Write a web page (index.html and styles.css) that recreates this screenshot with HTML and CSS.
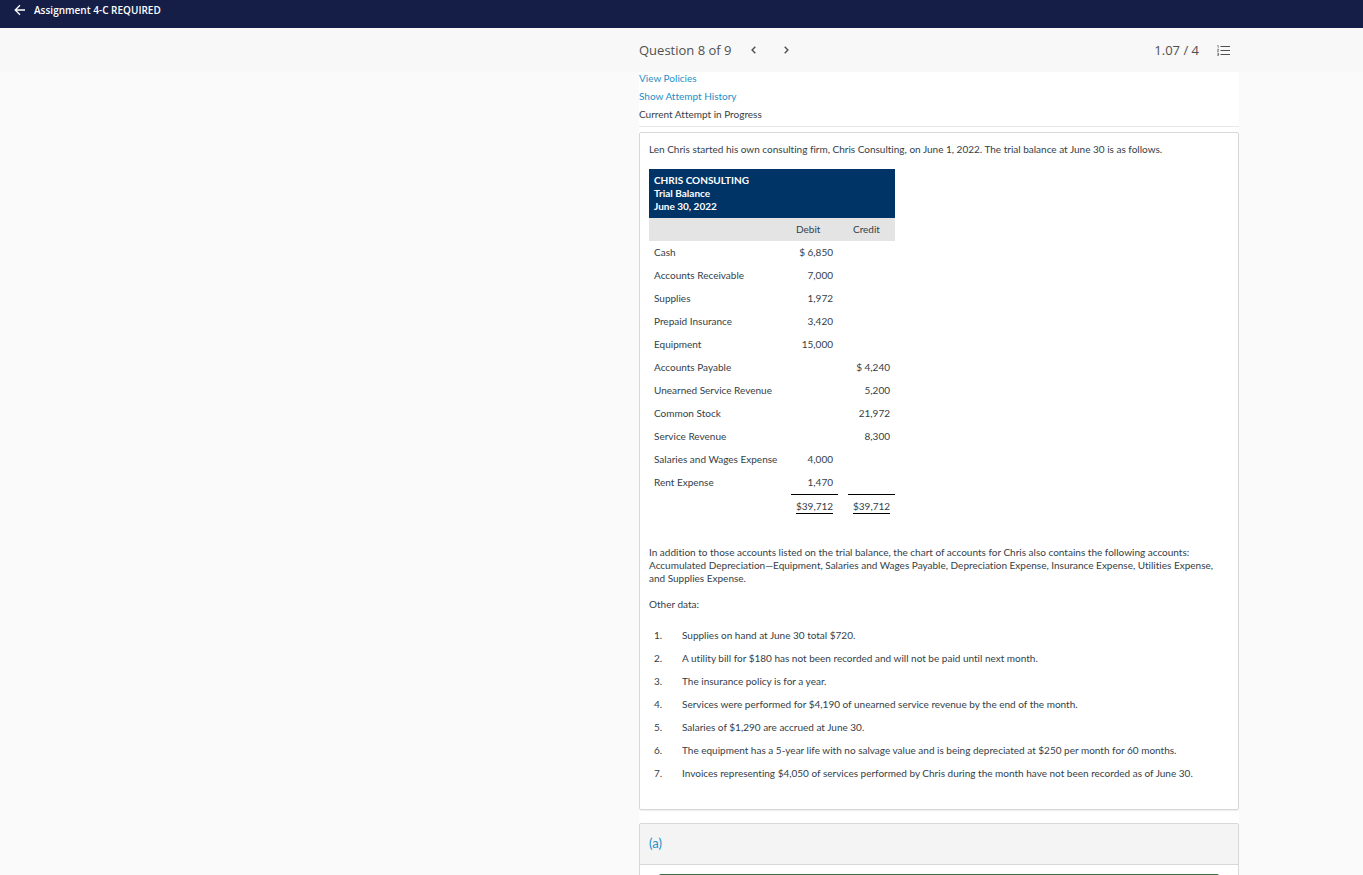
FILE: index.html
```html
<!DOCTYPE html>
<html lang="en">
<head>
<meta charset="utf-8">
<title>Assignment 4-C REQUIRED</title>
<link rel="stylesheet" href="styles.css">
</head>
<body>
<header class="topbar">
  <button class="icon-button" type="button" aria-label="Back">
    <svg width="12" height="12" viewBox="0 0 12 12" fill="none" stroke="currentColor" stroke-width="1.3"><path d="M11 6H1.5M6 1.2L1.2 6L6 10.8"/></svg>
  </button>
  <h1 class="topbar-title">Assignment 4-C REQUIRED</h1>
</header>
<nav class="question-bar">
  <div class="question-inner">
    <span class="question-label">Question 8 of 9</span>
    <button class="icon-button step" type="button" aria-label="Previous question">
      <svg width="5" height="8" viewBox="0 0 5 8" fill="none" stroke="currentColor" stroke-width="1.4"><path d="M4.3 .8L1.1 4L4.3 7.2"/></svg>
    </button>
    <button class="icon-button step" type="button" aria-label="Next question">
      <svg width="5" height="8" viewBox="0 0 5 8" fill="none" stroke="currentColor" stroke-width="1.4"><path d="M.7 .8L3.9 4L.7 7.2"/></svg>
    </button>
    <span class="score">1.07 / 4</span>
    <button class="icon-button list" type="button" aria-label="Question list">
      <svg width="13" height="11" viewBox="0 0 13 11" fill="none" stroke="currentColor"><path d="M3.5 1.5H13M3.5 5.5H13M3.5 9.5H13"/><path stroke-width=".7" d="M.3 .6H1.2V2.7M.2 4.3H1.7L.3 6.4H1.8M.2 8.2H1.6V10.4H.2M.6 9.3H1.6"/></svg>
    </button>
  </div>
</nav>
<main class="page">
  <div class="content">
    <div class="attempt">
      <a class="link" href="#">View Policies</a>
      <a class="link" href="#">Show Attempt History</a>
      <span>Current Attempt in Progress</span>
    </div>
    <section class="card">
      <p>Len Chris started his own consulting firm, Chris Consulting, on June 1, 2022. The trial balance at June 30 is as follows.</p>
      <table class="balance">
        <colgroup><col class="c-name"><col class="c-gap"><col class="c-num"><col class="c-gap"><col class="c-num"></colgroup>
        <thead>
          <tr class="heading"><th colspan="5">CHRIS CONSULTING<br>Trial Balance<br>June 30, 2022</th></tr>
          <tr class="subheading"><td></td><td></td><th>Debit</th><td></td><th>Credit</th></tr>
        </thead>
        <tbody>
          <tr><td>Cash</td><td></td><td>$ 6,850</td><td></td><td></td></tr>
          <tr><td>Accounts Receivable</td><td></td><td>7,000</td><td></td><td></td></tr>
          <tr><td>Supplies</td><td></td><td>1,972</td><td></td><td></td></tr>
          <tr><td>Prepaid Insurance</td><td></td><td>3,420</td><td></td><td></td></tr>
          <tr><td>Equipment</td><td></td><td>15,000</td><td></td><td></td></tr>
          <tr><td>Accounts Payable</td><td></td><td></td><td></td><td>$ 4,240</td></tr>
          <tr><td>Unearned Service Revenue</td><td></td><td></td><td></td><td>5,200</td></tr>
          <tr><td>Common Stock</td><td></td><td></td><td></td><td>21,972</td></tr>
          <tr><td>Service Revenue</td><td></td><td></td><td></td><td>8,300</td></tr>
          <tr><td>Salaries and Wages Expense</td><td></td><td>4,000</td><td></td><td></td></tr>
          <tr><td>Rent Expense</td><td></td><td>1,470</td><td></td><td></td></tr>
          <tr><td></td><td></td><td class="total"><span>$39,712</span></td><td></td><td class="total"><span>$39,712</span></td></tr>
        </tbody>
      </table>
      <p>In addition to those accounts listed on the trial balance, the chart of accounts for Chris also contains the following accounts: Accumulated Depreciation—Equipment, Salaries and Wages Payable, Depreciation Expense, Insurance Expense, Utilities Expense, and Supplies Expense.</p>
      <p>Other data:</p>
      <ol class="data-list">
        <li>Supplies on hand at June 30 total $720.</li>
        <li>A utility bill for $180 has not been recorded and will not be paid until next month.</li>
        <li>The insurance policy is for a year.</li>
        <li>Services were performed for $4,190 of unearned service revenue by the end of the month.</li>
        <li>Salaries of $1,290 are accrued at June 30.</li>
        <li>The equipment has a 5-year life with no salvage value and is being depreciated at $250 per month for 60 months.</li>
        <li>Invoices representing $4,050 of services performed by Chris during the month have not been recorded as of June 30.</li>
      </ol>
    </section>
    <section class="part">
      <h2 class="part-title"><a class="link" href="#">(a)</a></h2>
      <div class="part-body"><div class="answer"></div></div>
    </section>
  </div>
</main>
</body>
</html>
```
FILE: styles.css
```css
* { box-sizing: border-box; }

body {
  margin: 0;
  height: 100vh;
  overflow: hidden;
  display: flex;
  flex-direction: column;
  background: #fafafa;
  color: #343e48;
  font: 10px/13px Lato, sans-serif;
  font-variant-ligatures: none;
}

h1, h2, p { margin: 0; }

.icon-button {
  display: flex;
  padding: 0;
  border: 0;
  background: none;
  color: inherit;
}

.link { color: #1c8fc9; text-decoration: none; }

.topbar {
  flex: none;
  display: flex;
  align-items: center;
  gap: 8px;
  height: 28px;
  padding: 0 14px 8px;
  background: #141e46;
  color: #fff;
}
.topbar-title { font: 600 10px/14px "Open Sans", sans-serif; }

.question-bar {
  flex: none;
  height: 44px;
  padding-right: 124px;
  background: #f8f8f8;
}
.question-inner {
  display: flex;
  align-items: center;
  width: 600px;
  height: 100%;
  margin-left: auto;
  color: #505050;
  font: 13px/18px "Open Sans", sans-serif;
}
.question-label { margin-right: 20px; }
.step { margin-right: 28px; }
.score { margin-left: auto; }
.list { margin: 0 9px 0 18px; }

.page {
  flex: 1;
  min-height: 0;
  padding-right: 124px;
  overflow: hidden;
}
.content {
  width: 600px;
  min-height: 100%;
  margin-left: auto;
  background: #fff;
}
.attempt {
  display: flex;
  flex-direction: column;
  align-items: flex-start;
  gap: 5px;
  padding-bottom: 5px;
  margin-bottom: 5px;
  border-bottom: 1px solid #e8e8e8;
}

.card {
  padding: 10px 9px 24px;
  border: 1px solid #d8d8d8;
  border-radius: 2px;
  box-shadow: 0 1px 1px #eee;
}
.card p { margin-bottom: 13px; }

.balance {
  width: 246px;
  margin-bottom: 27px;
  table-layout: fixed;
  border-collapse: separate;
  border-spacing: 0;
}
.c-name { width: 132px; }
.c-gap { width: 10px; }
.c-num { width: 47px; }
.balance th, .balance td {
  height: 23px;
  padding: 5px;
  text-align: right;
  white-space: nowrap;
}
.balance td:first-child, .balance .heading th { text-align: left; }
.balance .heading th { background: #003366; color: #fff; font-weight: bold; }
.subheading { background: #e4e4e4; }
.balance .subheading th { text-align: left; font-weight: normal; }
.balance .total {
  padding-top: 4px;
  border-top: 1px solid #000;
}
.total span { display: inline-block; border-bottom: 1px solid #000; line-height: 14px; }

.data-list {
  margin: 0;
  padding: 0;
  list-style: none;
  counter-reset: item;
}
.data-list li {
  display: grid;
  grid-template-columns: 28px 1fr;
  padding: 5px;
  counter-increment: item;
}
.data-list li::before { content: counter(item) "."; }

.part {
  margin-top: 13px;
  border: 1px solid #d8d8d8;
  border-radius: 2px;
}
.part-title {
  padding: 11px 9px 12px;
  border-bottom: 1px solid #d8d8d8;
  background: #f4f4f4;
  font-size: 13px;
  font-weight: normal;
  line-height: 17px;
}
.part-body { padding: 9px 19px; }
.answer { height: 40px; border-top: 2px solid #3c6e45; border-radius: 2px; }
```
